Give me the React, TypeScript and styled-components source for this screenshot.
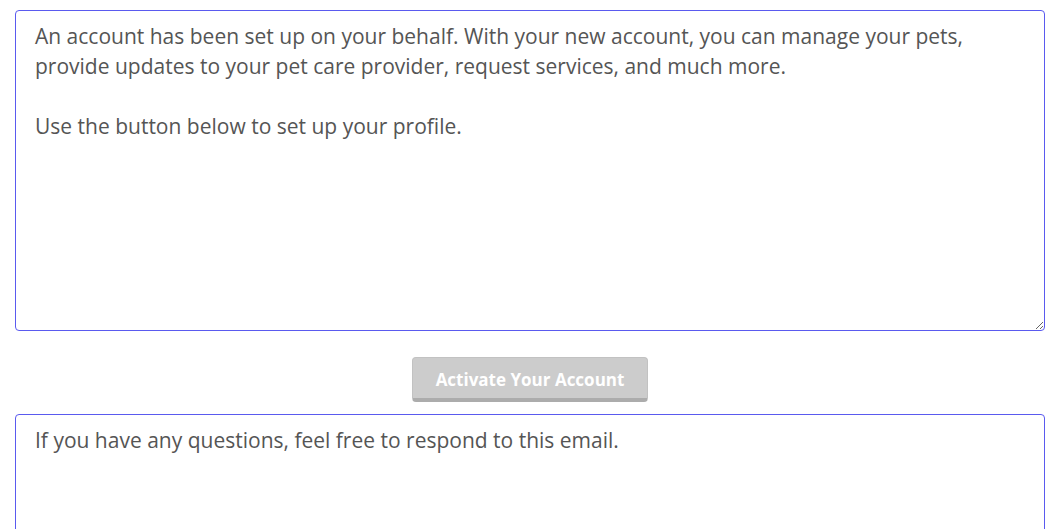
import {ReactElement} from "react";
import styled, {createGlobalStyle} from "styled-components";

const GlobalStyle = createGlobalStyle`
  html, body {
    margin: 0;
    height: 100%;
    overflow: hidden;
    background: #fff;
    font-family: "Open Sans", "Liberation Sans", sans-serif;
  }
`

const Page = styled.div`
  padding: 10px 7px 0 15px;
  display: flex;
  flex-direction: column;
  align-items: stretch;
`

const MessageBox = styled.textarea<{$height: number}>`
  box-sizing: border-box;
  width: 100%;
  height: ${({$height}) => $height}px;
  margin: 0;
  padding: 10px 19px;
  border: 1px solid #5a5aef;
  border-radius: 4px;
  outline: none;
  font-family: "Open Sans", "Liberation Sans", sans-serif;
  font-size: 21px;
  line-height: 30px;
  color: #555;
  background: #fff;
  resize: ${({$height}) => ($height > 200 ? "both" : "none")};
  display: block;
`

const ButtonRow = styled.div`
  display: flex;
  justify-content: center;
  padding: 26px 0 12px;
`

const ActivateButton = styled.button`
  box-sizing: border-box;
  width: 236px;
  height: 45px;
  border: 1px solid #c2c2c2;
  border-bottom: 4px solid #acacac;
  border-radius: 4px;
  background: #cccccc;
  color: #fff;
  font-family: "Open Sans", "Liberation Sans", sans-serif;
  font-weight: 700;
  font-size: 17px;
  padding: 3px 0 0;
  cursor: not-allowed;
`

const App = (): ReactElement => (
    <>
        <GlobalStyle/>
        <Page>
            <MessageBox
                $height={321}
                readOnly
                defaultValue={"An account has been set up on your behalf. With your new account, you can manage your pets, provide updates to your pet care provider, request services, and much more.\n\nUse the button below to set up your profile."}
            />
            <ButtonRow>
                <ActivateButton disabled>Activate Your Account</ActivateButton>
            </ButtonRow>
            <MessageBox
                $height={160}
                readOnly
                defaultValue={"If you have any questions, feel free to respond to this email."}
            />
        </Page>
    </>
)

export default App
